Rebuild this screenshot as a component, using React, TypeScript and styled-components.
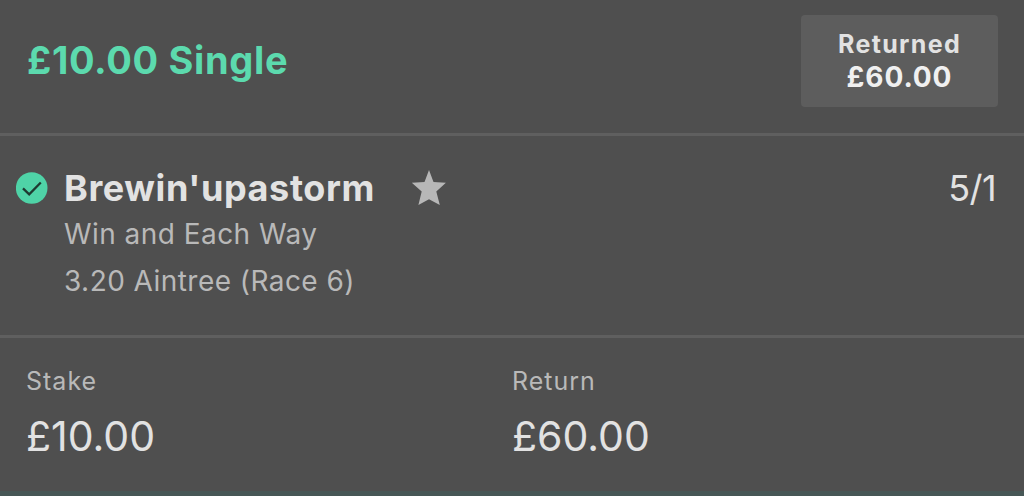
import React from 'react';
import styled, { createGlobalStyle } from 'styled-components';

const theme = {
  background: '#4f4f4f',
  panel: '#5d5d5d',
  divider: '#5f5f5f',
  green: '#5cdaae',
  white: '#f0f0f0',
  text: '#e2e2e2',
  muted: '#b9b9b9',
};

const GlobalStyle = createGlobalStyle`
  body {
    margin: 0;
    background: ${theme.background};
  }
`;

const Slip = styled.main`
  box-sizing: border-box;
  display: grid;
  grid-template-rows: 133px 3px 199px 3px 153px 5px;
  width: 1024px;
  height: 496px;
  font-family: Inter, 'Liberation Sans', sans-serif;
  color: ${theme.text};
  background: ${theme.background};
`;

const Divider = styled.div`
  background: ${theme.divider};
`;

const BottomEdge = styled.div`
  background: #475756;
`;

const Header = styled.header`
  display: flex;
  justify-content: space-between;
  align-items: flex-start;
  padding: 15px 26px 0 27px;
`;

const BetTitle = styled.h1`
  margin: 20px 0 0;
  font-size: 38px;
  line-height: 50px;
  font-weight: 700;
  letter-spacing: 0.65px;
  white-space: nowrap;
  color: ${theme.green};
`;

const Returned = styled.div`
  display: flex;
  flex-direction: column;
  align-items: center;
  box-sizing: border-box;
  width: 197px;
  height: 92px;
  padding-top: 13px;
  border-radius: 4px;
  background: ${theme.panel};
`;

const ReturnedText = styled.span<{ $size: number; $spacing: number; $color: string }>`
  font-size: ${(p) => p.$size}px;
  line-height: 33px;
  font-weight: 700;
  letter-spacing: ${(p) => p.$spacing}px;
  color: ${(p) => p.$color};
`;

const Selection = styled.section`
  display: grid;
  grid-template-columns: 32px 1fr auto;
  column-gap: 16px;
  align-items: start;
  padding: 27px 28px 0 16px;
`;

const CheckIcon = styled.svg`
  width: 32px;
  height: 32px;
  margin-top: 9px;
`;

const NameRow = styled.div`
  display: flex;
  align-items: center;
  height: 50px;
`;

const Name = styled.h2`
  margin: 0;
  width: 347px;
  font-size: 36px;
  font-weight: 700;
  letter-spacing: 0.6px;
  white-space: nowrap;
`;

const StarIcon = styled.svg`
  width: 36px;
  height: 36px;
`;

const Details = styled.div`
  margin-top: -2px;
`;

const Detail = styled.p`
  margin: 0;
  font-size: 28px;
  line-height: 47px;
  letter-spacing: 0.45px;
  color: ${theme.muted};
`;

const Odds = styled.span`
  font-size: 36px;
  line-height: 50px;
  letter-spacing: -0.6px;
`;

const Totals = styled.section`
  display: grid;
  grid-template-columns: 486px 1fr;
  padding: 25px 26px 0 26px;
`;

const Label = styled.div`
  font-size: 25px;
  line-height: 36px;
  letter-spacing: 1px;
  color: ${theme.muted};
`;

const Amount = styled.div`
  font-size: 41px;
  line-height: 50px;
  margin-top: 12px;
`;

const App: React.FC = () => (
  <>
    <GlobalStyle />
    <Slip>
      <Header>
        <BetTitle>£10.00 Single</BetTitle>
        <Returned>
          <ReturnedText $size={25} $spacing={1.35} $color={theme.text}>
            Returned
          </ReturnedText>
          <ReturnedText $size={28} $spacing={0.9} $color={theme.white}>
            £60.00
          </ReturnedText>
        </Returned>
      </Header>
      <Divider />
      <Selection>
        <CheckIcon viewBox="0 0 32 32">
          <circle cx="15.7" cy="16" r="15.8" fill="#4fd3a7" />
          <path d="M7 16.3l6.2 6L24.8 10.5" fill="none" stroke="#1f3a31" strokeWidth="2.3" />
        </CheckIcon>
        <div>
          <NameRow>
            <Name>Brewin'upastorm</Name>
            <StarIcon viewBox="0 0 36 36">
              <path
                d="M18 0L22.5 12L34.9 12.7L25.3 21.4L28.8 35L18 29.2L7.4 35L10.7 21.4L0.8 12.7L13.5 12Z"
                fill="#b7b7b7"
              />
            </StarIcon>
          </NameRow>
          <Details>
            <Detail>Win and Each Way</Detail>
            <Detail>3.20 Aintree (Race 6)</Detail>
          </Details>
        </div>
        <Odds>5/1</Odds>
      </Selection>
      <Divider />
      <Totals>
        <div>
          <Label>Stake</Label>
          <Amount>£10.00</Amount>
        </div>
        <div>
          <Label>Return</Label>
          <Amount>£60.00</Amount>
        </div>
      </Totals>
      <BottomEdge />
    </Slip>
  </>
);

export default App;
